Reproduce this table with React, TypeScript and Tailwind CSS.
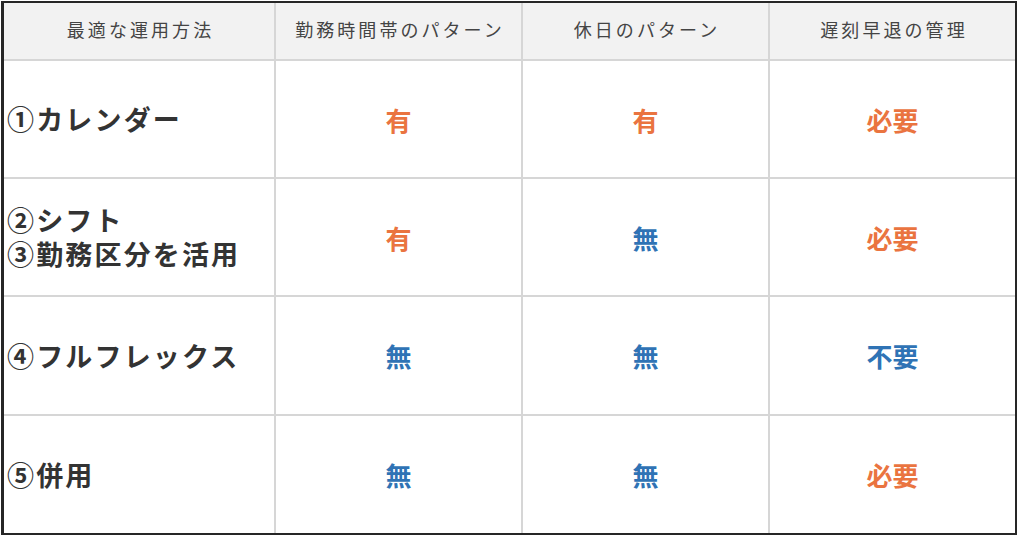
const font = { fontFamily: '"Noto Sans CJK JP", "Noto Sans", sans-serif' };

type Val = { text: string; tone: 'o' | 'b' };

const head = ['最適な運用方法', '勤務時間帯のパターン', '休日のパターン', '遅刻早退の管理'];

const rows: { label: string[]; vals: Val[] }[] = [
  { label: ['①カレンダー'], vals: [{ text: '有', tone: 'o' }, { text: '有', tone: 'o' }, { text: '必要', tone: 'o' }] },
  { label: ['②シフト', '③勤務区分を活用'], vals: [{ text: '有', tone: 'o' }, { text: '無', tone: 'b' }, { text: '必要', tone: 'o' }] },
  { label: ['④フルフレックス'], vals: [{ text: '無', tone: 'b' }, { text: '無', tone: 'b' }, { text: '不要', tone: 'b' }] },
  { label: ['⑤併用'], vals: [{ text: '無', tone: 'b' }, { text: '無', tone: 'b' }, { text: '必要', tone: 'o' }] },
];

export default function App() {
  return (
    <div className="w-[1020px] h-[537px] bg-white pt-px pl-px" style={font}>
      <div className="w-[1016px] h-[534px] border-l-[3px] border-t-2 border-r-2 border-b-2 border-[#262626] grid grid-cols-[272px_247px_247px_1fr] grid-rows-[58px_118px_118px_119px_1fr]">
        {head.map((h, i) => (
          <div
            key={h}
            className={`bg-[#f2f2f2] border-b-2 border-[#d6d6d6] flex items-center justify-center pb-[3px] pl-[3px] text-[18px] tracking-[0.17em] text-[#444] ${i < 3 ? 'border-r-2' : ''}`}
          >
            {h}
          </div>
        ))}
        {rows.map((r, ri) => (
          <div key={ri} className="contents">
            <div className={`border-r-2 border-[#d6d6d6] flex flex-col justify-center pl-[3px] text-[27px] leading-[34px] font-bold text-[#333] tracking-[0.08em] ${ri < 3 ? 'border-b-2' : ''}`}>
              {r.label.map((l) => (
                <span key={l}>{l}</span>
              ))}
            </div>
            {r.vals.map((v, vi) => (
              <div
                key={vi}
                className={`border-[#d6d6d6] flex items-center justify-center text-[26px] font-bold ${vi < 2 ? 'border-r-2' : ''} ${ri < 3 ? 'border-b-2' : ''} ${v.tone === 'o' ? 'text-[#ea7440]' : 'text-[#2f73b5]'}`}
              >
                {v.text}
              </div>
            ))}
          </div>
        ))}
      </div>
    </div>
  );
}
